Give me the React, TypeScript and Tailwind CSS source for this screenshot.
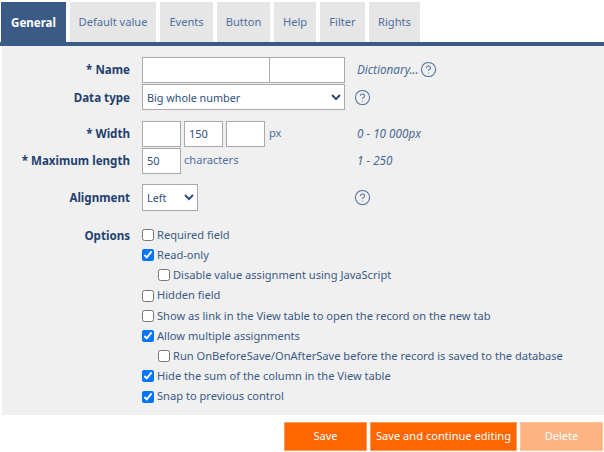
import { CircleHelp } from "lucide-react"

const tabs = [
    { name: "Default value", width: "w-[86px]" },
    { name: "Events", width: "w-[53px]" },
    { name: "Button", width: "w-[53px]" },
    { name: "Help", width: "w-[42px]" },
    { name: "Filter", width: "w-[45px]" },
    { name: "Rights", width: "w-[51px]" },
]

const options = [
    { label: "Required field", checked: false, nested: false },
    { label: "Read-only", checked: true, nested: false },
    { label: "Disable value assignment using JavaScript", checked: false, nested: true },
    { label: "Hidden field", checked: false, nested: false },
    { label: "Show as link in the View table to open the record on the new tab", checked: false, nested: false },
    { label: "Allow multiple assignments", checked: true, nested: false },
    { label: "Run OnBeforeSave/OnAfterSave before the record is saved to the database", checked: false, nested: true },
    { label: "Hide the sum of the column in the View table", checked: true, nested: false },
    { label: "Snap to previous control", checked: true, nested: false },
]

const inputClass = "h-[26px] border border-[#a9a9a9] bg-white px-[4px] text-[11px] text-[#2f4f7f] outline-none"
const selectClass = "h-[26px] border border-[#a9a9a9] bg-white text-[10.8px] text-[#2f4f7f] outline-none"

const Help = () => <CircleHelp size={17} strokeWidth={1.5} className="-ml-[3px] text-[#4f6f9f]" />

const Label = ({ text }: { text: string }) => (
    <label className="w-[128px] shrink-0 pt-px text-right text-[11.6px] font-bold text-[#1f3f6f]">{text}</label>
)

const Hint = ({ text }: { text: string }) => <span className="text-[11.7px] italic text-[#4a6a96]">{text}</span>

const App = () => {
    return (
        <div className="h-[452px] w-[604px] overflow-hidden bg-white pt-[2px] font-['Noto_Sans',sans-serif] text-[11.1px]">
            <div className="flex h-[40px] gap-[4px] pl-[1px]">
                <div className="flex w-[65px] items-center justify-center bg-[#3b5a86] pt-px text-[11.5px] font-bold text-white">General</div>
                {tabs.map((tab) => (
                    <div key={tab.name} className={`flex items-center justify-center bg-[#e6e6e6] pt-px text-[#4f6f9f] ${tab.width}`}>
                        {tab.name}
                    </div>
                ))}
            </div>
            <div className="h-[4px] bg-[#3b5a86]" />
            <div className="ml-[2px] h-[369px] bg-[#f0f0f0] pt-[11px]">
                <div className="flex h-[25px] items-center gap-[12px]">
                    <Label text="* Name" />
                    <div className="flex h-[25px] w-[203px]">
                        <input className={`${inputClass} h-[25px] w-[128px]`} />
                        <input className={`${inputClass} -ml-px h-[25px] w-[76px]`} />
                    </div>
                    <div className="flex items-center gap-[4px]">
                        <Hint text="Dictionary..." />
                        <Help />
                    </div>
                </div>
                <div className="mt-[2px] flex h-[26px] items-center gap-[12px]">
                    <Label text="Data type" />
                    <select className={`${selectClass} w-[203px]`} defaultValue="Big whole number">
                        <option>Big whole number</option>
                    </select>
                    <div className="flex items-center"><Help /></div>
                </div>
                <div className="mt-[11px] flex h-[25px] items-center gap-[12px]">
                    <Label text="* Width" />
                    <div className="flex w-[203px] items-center gap-[3px]">
                        <input className={`${inputClass} w-[39px]`} />
                        <input className={`${inputClass} w-[39px]`} defaultValue="150" />
                        <input className={`${inputClass} w-[39px]`} />
                        <span className="ml-[1px] text-[#4f6f9f]">px</span>
                    </div>
                    <div><Hint text="0 - 10 000px" /></div>
                </div>
                <div className="mt-[2px] flex h-[25px] items-center gap-[12px]">
                    <Label text="* Maximum length" />
                    <div className="flex w-[203px] items-center gap-[3px]">
                        <input className={`${inputClass} w-[39px]`} defaultValue="50" />
                        <span className="text-[#4f6f9f]">characters</span>
                    </div>
                    <div><Hint text="1 - 250" /></div>
                </div>
                <div className="mt-[11px] flex h-[27px] items-center gap-[12px]">
                    <Label text="Alignment" />
                    <div className="w-[203px]">
                        <select className={`${selectClass} h-[27px] w-[56px]`} defaultValue="Left">
                            <option>Left</option>
                        </select>
                    </div>
                    <div className="flex items-center"><Help /></div>
                </div>
                <div className="mt-[15px] flex gap-[12px]">
                    <Label text="Options" />
                    <div className="mt-px flex flex-col gap-[4px]">
                        {options.map((option) => (
                            <label key={option.label} className={`flex h-[16.2px] items-center gap-[3px] text-[#3b5a86] ${option.nested ? "ml-[16px]" : ""}`}>
                                <input type="checkbox" defaultChecked={option.checked} className="m-0 size-[12px]" />
                                <span className="whitespace-nowrap">{option.label}</span>
                            </label>
                        ))}
                    </div>
                </div>
            </div>
            <div className="mt-[7px] flex justify-end gap-[3px] pr-[1px]">
                <button className="h-[29px] w-[83px] border border-[#ff9a5c] bg-[#ff6600] text-white">Save</button>
                <button className="h-[29px] w-[147px] whitespace-nowrap border border-[#ff9a5c] bg-[#ff6600] text-white">Save and continue editing</button>
                <button className="h-[29px] w-[83px] border border-[#ffc39c] bg-[#ffb380] text-white">Delete</button>
            </div>
        </div>
    )
}

export default App
